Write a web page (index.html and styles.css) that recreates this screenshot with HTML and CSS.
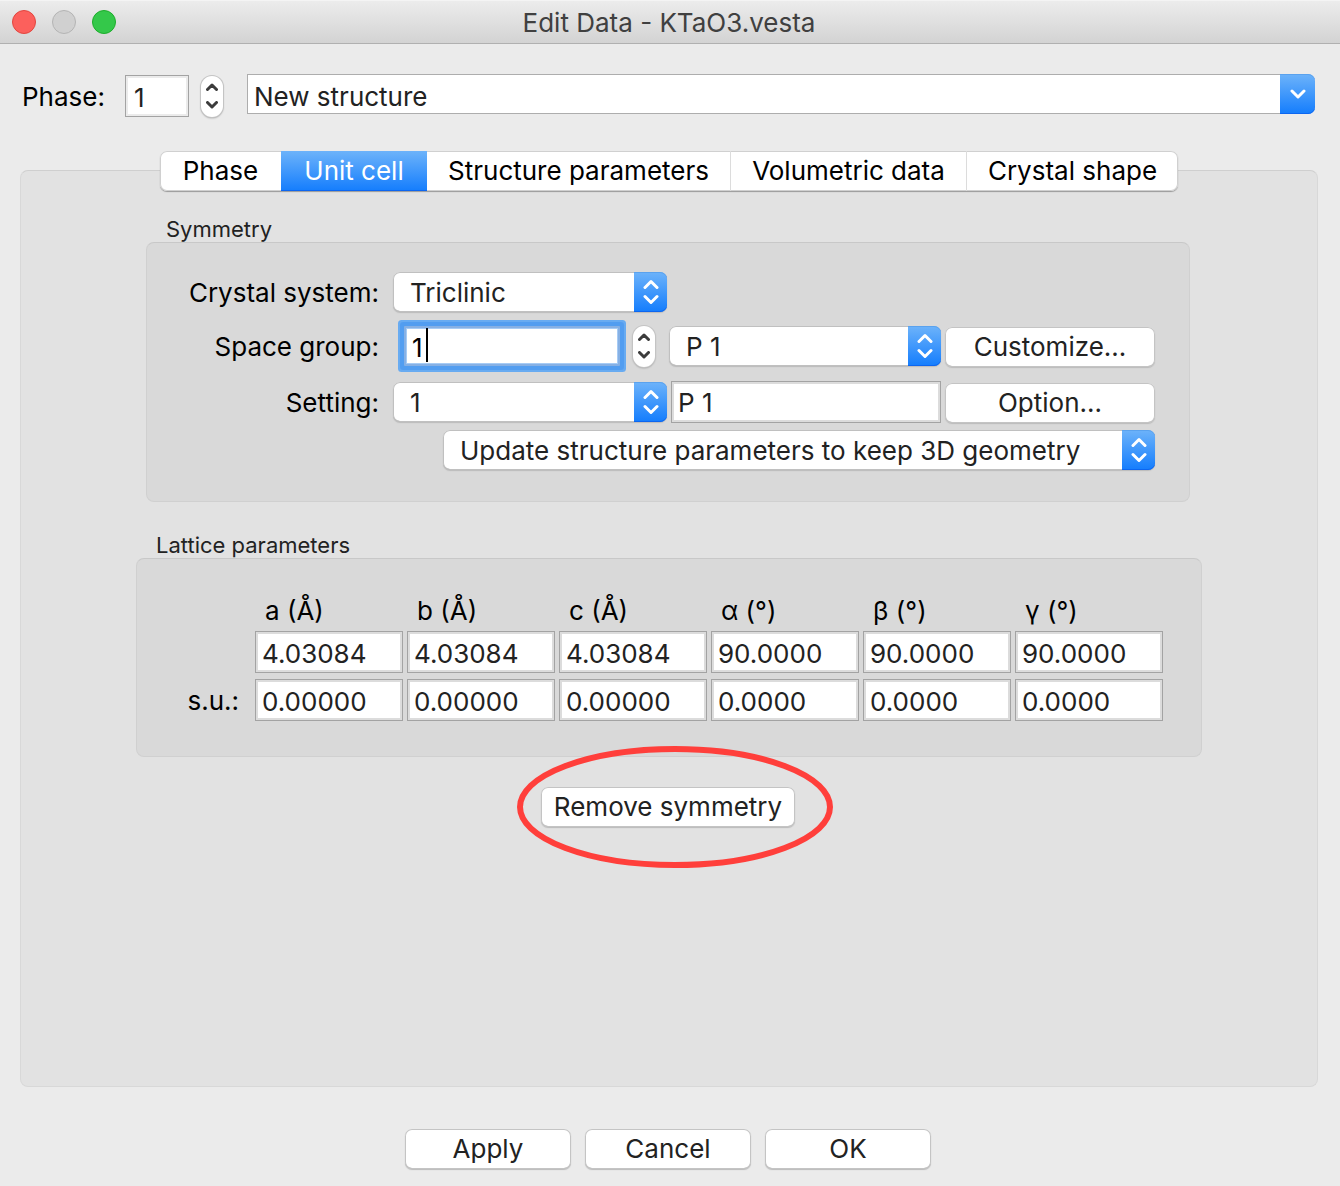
FILE: index.html
```html
<!DOCTYPE html>
<html lang="en">
<head>
<meta charset="utf-8">
<title>Edit Data - KTaO3.vesta</title>
<link rel="stylesheet" href="styles.css">
</head>
<body>
<svg class="defs" aria-hidden="true">
  <symbol id="up-down" viewBox="0 0 16 26"><path d="M2 8.500 8 2.500 14 8.500M2 17.500 8 23.500 14 17.500"/></symbol>
  <symbol id="up" viewBox="0 0 12 8"><path d="M1.500 6.500 6 2 10.500 6.500"/></symbol>
  <symbol id="down" viewBox="0 0 12 8"><path d="M1.500 1.500 6 6 10.500 1.500"/></symbol>
</svg>
<header class="titlebar">
  <div class="lights">
    <button class="light close" aria-label="Close"></button>
    <button class="light minimize" aria-label="Minimize" disabled></button>
    <button class="light zoom" aria-label="Zoom"></button>
  </div>
  <h1 class="title">Edit Data - KTaO3.vesta</h1>
</header>
<main class="content">
  <div class="phase-row">
    <label for="phase">Phase:</label>
    <input class="field phase-number" id="phase" type="text" value="1">
    <div class="stepper">
      <button aria-label="Next phase"><svg><use href="#up"/></svg></button>
      <button aria-label="Previous phase"><svg><use href="#down"/></svg></button>
    </div>
    <div class="combo">
      <input type="text" value="New structure" aria-label="Phase title">
      <button class="combo-button" aria-label="Show phases"><svg viewBox="0 0 16 10"><path d="M2 2 8 8 14 2"/></svg></button>
    </div>
  </div>

  <nav class="tabs" role="tablist">
    <button class="tab" role="tab">Phase</button>
    <button class="tab active" role="tab" aria-selected="true">Unit cell</button>
    <button class="tab" role="tab">Structure parameters</button>
    <button class="tab" role="tab">Volumetric data</button>
    <button class="tab" role="tab">Crystal shape</button>
  </nav>

  <section class="panel">
    <section class="group symmetry">
      <h2>Symmetry</h2>
      <div class="box symmetry-grid">
        <label for="system">Crystal system:</label>
        <div class="popup">
          <select id="system"><option>Triclinic</option></select>
          <span class="cap"><svg><use href="#up-down"/></svg></span>
        </div>

        <label class="row-start" for="space-group">Space group:</label>
        <div class="spin">
          <div class="focus-field">
            <input id="space-group" type="text" value="1">
            <span class="caret"></span>
          </div>
          <div class="stepper">
            <button aria-label="Next space group"><svg><use href="#up"/></svg></button>
            <button aria-label="Previous space group"><svg><use href="#down"/></svg></button>
          </div>
        </div>
        <div class="popup group-symbol">
          <select aria-label="Space group symbol"><option>P 1</option></select>
          <span class="cap"><svg><use href="#up-down"/></svg></span>
        </div>
        <button class="button">Customize...</button>

        <label class="row-start" for="setting">Setting:</label>
        <div class="popup">
          <select id="setting"><option>1</option></select>
          <span class="cap"><svg><use href="#up-down"/></svg></span>
        </div>
        <input class="field" type="text" value="P 1" aria-label="Setting symbol">
        <button class="button">Option...</button>

        <div class="popup update-mode">
          <select aria-label="Update mode"><option>Update structure parameters to keep 3D geometry</option></select>
          <span class="cap"><svg><use href="#up-down"/></svg></span>
        </div>
      </div>
    </section>

    <section class="group lattice">
      <h2>Lattice parameters</h2>
      <div class="box">
        <table>
          <thead>
            <tr><td></td><th id="a">a (Å)</th><th id="b">b (Å)</th><th id="c">c (Å)</th><th id="al">α (°)</th><th id="be">β (°)</th><th id="ga">γ (°)</th></tr>
          </thead>
          <tbody>
            <tr>
              <td></td>
              <td><input class="field" aria-labelledby="a" value="4.03084"></td>
              <td><input class="field" aria-labelledby="b" value="4.03084"></td>
              <td><input class="field" aria-labelledby="c" value="4.03084"></td>
              <td><input class="field" aria-labelledby="al" value="90.0000"></td>
              <td><input class="field" aria-labelledby="be" value="90.0000"></td>
              <td><input class="field" aria-labelledby="ga" value="90.0000"></td>
            </tr>
            <tr>
              <th class="row-head" id="su">s.u.:</th>
              <td><input class="field" aria-labelledby="su a" value="0.00000"></td>
              <td><input class="field" aria-labelledby="su b" value="0.00000"></td>
              <td><input class="field" aria-labelledby="su c" value="0.00000"></td>
              <td><input class="field" aria-labelledby="su al" value="0.0000"></td>
              <td><input class="field" aria-labelledby="su be" value="0.0000"></td>
              <td><input class="field" aria-labelledby="su ga" value="0.0000"></td>
            </tr>
          </tbody>
        </table>
      </div>
    </section>

    <div class="remove">
      <button class="button">Remove symmetry</button>
      <svg class="mark" viewBox="0 0 316 122" aria-hidden="true"><ellipse cx="158" cy="61" rx="155" ry="58"/></svg>
    </div>
  </section>

  <footer class="actions">
    <button class="button">Apply</button>
    <button class="button">Cancel</button>
    <button class="button">OK</button>
  </footer>
</main>
</body>
</html>
```
FILE: styles.css
```css
* { box-sizing: border-box; }

body {
  margin: 0;
  min-height: 100vh;
  display: flex;
  flex-direction: column;
  background: #ebebeb;
  color: #000;
  font: 26px/30px Inter, "Liberation Sans", sans-serif;
}

button, input, select {
  margin: 0;
  padding: 0;
  border: 0;
  font: inherit;
  color: #222;
  outline: none;
}

svg { display: block; fill: none; stroke-linecap: round; stroke-linejoin: round; }
.defs { position: absolute; width: 0; height: 0; }

.titlebar {
  height: 44px;
  display: grid;
  grid-template-columns: 1fr auto 1fr;
  align-items: center;
  padding: 0 14px 0 12px;
  background: linear-gradient(#ececec, #d3d3d3);
  border-top: 1px solid #f4f4f4;
  border-bottom: 1px solid #b0b0b0;
}
.lights { display: flex; gap: 16px; }
.light { width: 24px; height: 24px; border: 1px solid; border-radius: 50%; }
.close { background: #fc605c; border-color: #e2463f; }
.minimize { background: #d0d0d0; border-color: #b4b4b4; }
.zoom { background: #34c84a; border-color: #1dad2b; }
.title { margin: 0; padding-top: 2px; font-size: 26px; font-weight: 400; color: #404040; }

.content {
  flex: 1;
  display: flex;
  flex-direction: column;
  padding: 30px 22px 17px 20px;
}

.phase-row {
  display: flex;
  align-items: center;
  height: 44px;
  margin: 0 3px 33px 2px;
}

.field {
  width: 100%;
  height: 42px;
  padding: 2px 6px 0;
  background: #fff;
  border: 1px solid #a3a3a3;
  box-shadow: inset 0 0 0 2px #dcdcdc;
}
.phase-number { width: 64px; margin: 0 12px 0 0; padding: 2px 8px 0; box-shadow: inset 0 0 0 2px #ebebeb; }
.phase-row label { width: 103px; padding-top: 2px; }

.stepper {
  flex: none;
  width: 22px;
  height: 41px;
  padding: 2px 0;
  display: flex;
  flex-direction: column;
  background: #fff;
  border-radius: 11px;
  box-shadow: 0 0 0 1px #c4c4c4, 0 1px 2px #888;
}
.stepper button { flex: 1; display: grid; place-items: center; background: none; }
.stepper svg { width: 12px; height: 8px; stroke: #3c3c3c; stroke-width: 3; }

.combo { flex: 1; display: flex; height: 40px; margin: 0 0 4px 24px; }
.combo input {
  flex: 1;
  min-width: 0;
  padding: 6px 6px 0;
  background: #fff;
  border: 1px solid #adadad;
  border-right: 0;
}
.combo-button, .cap {
  display: grid;
  place-items: center;
  background: linear-gradient(#6db3fa, #147dfd);
  border-radius: 0 7px 7px 0;
  box-shadow: inset 0 -1px #0d66f0, inset 0 1px #5aa2ee;
}
.combo-button { width: 35px; }
.combo-button svg { width: 16px; height: 10px; }
.combo-button svg, .cap svg { stroke: #fff; stroke-width: 3; }

.tabs {
  z-index: 1;
  align-self: center;
  display: grid;
  grid-template-columns: 121px 146px 303px 236px 212px;
  height: 40px;
  margin-bottom: -21px;
  border-radius: 7px;
  background: #fff;
  box-shadow: inset 0 0 0 1px #d0d0d0, 0 1px 1px #999;
}
.tab { background: none; color: #000; border-left: 1px solid #dcdcdc; }
.tab:first-child, .tab.active, .tab.active + .tab { border-left: 0; }
.tab.active { color: #fff; background: linear-gradient(#6db3fa, #147dfd); box-shadow: inset 0 -1px #0d66f0; }

.panel {
  flex: 1;
  display: flex;
  flex-direction: column;
  align-items: center;
  padding: 45px 10px 30px;
  background: #e2e2e2;
  border: 1px solid #d8d8d8;
  border-top-color: #cfcfcf;
  border-radius: 8px;
}

.group h2 {
  margin: 0 20px;
  height: 26px;
  font-size: 22px;
  line-height: 26px;
  font-weight: 400;
  color: #222;
}
.box { background: #d9d9d9; border: 1px solid #d0d0d0; border-top-color: #c8c8c8; border-radius: 8px; }

.symmetry { margin: 0 2px 30px 0; }
.symmetry-grid {
  display: grid;
  grid-template-columns: 242px 274px 270px 210px;
  grid-template-rows: 40px 54px 43px 40px;
  column-gap: 4px;
  row-gap: 7px;
  align-items: center;
  padding: 29px 34px 31px 0;
}
.symmetry-grid label { padding: 2px 10px 0 0; text-align: right; }
.symmetry-grid .button { margin-top: 2px; }
.row-start { grid-column: 1; }

.popup { display: grid; height: 40px; }
.popup select, .popup .cap { grid-area: 1 / 1; }
.popup select {
  appearance: none;
  width: 100%;
  padding: 2px 40px 0 17px;
  background: #fff;
  border-radius: 7px;
  box-shadow: inset 0 0 0 1px #c0c0c0, inset 0 -1px #999, 0 1px 1px #bbb;
}
.cap { justify-self: end; width: 33px; pointer-events: none; }
.cap svg { width: 16px; height: 26px; }
.group-symbol { justify-self: end; width: 272px; }
.update-mode { grid-column: 2 / -1; margin-left: 50px; }

.spin { display: flex; align-items: center; gap: 13px; padding-left: 11px; }
.focus-field { position: relative; flex: none; width: 216px; height: 40px; }
.focus-field input {
  width: 100%;
  height: 100%;
  padding: 2px 6px 0;
  color: #000;
  caret-color: transparent;
  background: #fff;
  border: 2px solid #86b0e4;
  border-radius: 1px;
  box-shadow: inset 0 0 0 1px #a6cbf5, 0 0 0 4px #529df0, 0 0 0 6px #68abf1;
}
.caret { position: absolute; left: 22px; top: 2px; width: 2px; height: 34px; background: #000; }

.button {
  height: 40px;
  background: #fff;
  border-radius: 7px;
  box-shadow: inset 0 0 0 1px #c4c4c4, inset 0 -1px #aaa, 0 1px 1px #bbb;
}

.lattice .box { padding: 30px 34px 29px 0; }
table { border-collapse: separate; border-spacing: 4px 6px; }
th, td { padding: 0; font-weight: 400; text-align: left; }
thead th { height: 30px; padding: 2px 0 0 10px; line-height: 28px; }
td .field { display: block; width: 148px; }
th.row-head { width: 110px; padding: 2px 12px 0 0; text-align: right; }

.remove { position: relative; margin: 30px 2px 0 0; }
.remove .button { width: 254px; }
.mark {
  position: absolute;
  left: -24px;
  top: -41px;
  width: 316px;
  height: 122px;
  stroke: #ff3f3b;
  stroke-width: 6;
  pointer-events: none;
}

.actions { display: flex; justify-content: center; gap: 14px; margin: 42px 2px 0 0; }
.actions .button { width: 166px; }
```
